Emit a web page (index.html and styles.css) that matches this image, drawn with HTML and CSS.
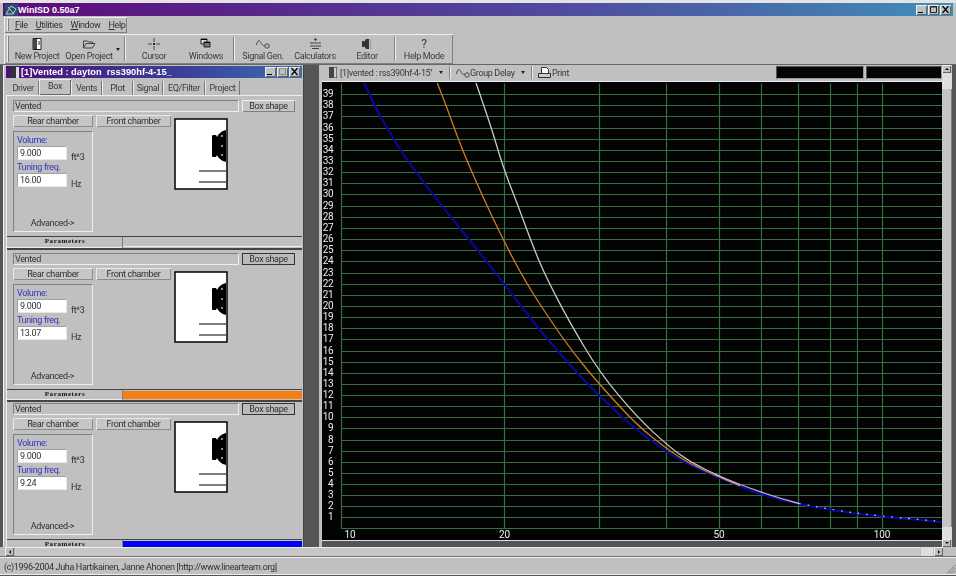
FILE: index.html
```html
<!DOCTYPE html>
<html lang="en">
<head>
    <meta charset="UTF-8">
    <meta name="viewport" content="width=device-width, initial-scale=1.0">
    <title>WinISD 0.50a7</title>
    <link rel="stylesheet" href="styles.css">
</head>
<body>
<div class="app">
    <div class="titlebar">
        <svg class="app-icon" width="13" height="12" viewBox="0 0 13 12"><rect width="13" height="12" fill="#2c4a6a"/><path d="M1 10L6 2l5 3-3 5zM3 3l6 7" stroke="#b8d0e0" fill="none"/></svg>
        <span class="app-name">WinISD 0.50a7</span>
        <div class="win-btns">
            <div class="win-btn"><svg width="11" height="9" viewBox="0 0 11 9"><path d="M2 7h5v1H2z" fill="#000"/></svg></div>
            <div class="win-btn"><svg width="11" height="9" viewBox="0 0 11 9"><path d="M2.5 1.5h6v6h-6zM2 2h7" stroke="#222" fill="none"/></svg></div>
            <div class="win-btn"><svg width="11" height="9" viewBox="0 0 11 9"><path d="M2.5 1l6 7M8.500 1l-6 7" stroke="#000" stroke-width="1.2"/></svg></div>
        </div>
    </div>

    <div class="menubar">
        <div class="menu-band">
            <div class="band-handle"></div>
            <span class="menu-item"><u>F</u>ile</span>
            <span class="menu-item"><u>U</u>tilities</span>
            <span class="menu-item"><u>W</u>indow</span>
            <span class="menu-item"><u>H</u>elp</span>
        </div>
    </div>

    <div class="toolbar">
        <div class="band-handle"></div>
        <div class="tool">
            <svg width="10" height="12" viewBox="0 0 10 12"><path d="M1 .5h8v11H1z" fill="#fff" stroke="#222"/><path d="M1 1h4v10H1z" fill="#444"/><path d="M7 3v4" stroke="#222"/></svg>
            <span>New Project</span>
        </div>
        <div class="tool">
            <svg width="14" height="12" viewBox="0 0 14 12"><path d="M1.5 10V3h4l1 1h4v2M1.500 10L4 5.500h9L10.500 10z" fill="none" stroke="#444"/></svg>
            <span>Open Project</span>
        </div>
        <div class="tool-arrow"></div>
        <div class="tool-sep"></div>
        <div class="tool">
            <svg width="12" height="12" viewBox="0 0 12 12"><path d="M6 0v4M6 8v4M0 6h4M8 6h4" stroke="#444"/><path d="M5 5h2v2H5z" fill="#222"/></svg>
            <span>Cursor</span>
        </div>
        <div class="tool">
            <svg width="12" height="12" viewBox="0 0 12 12"><path d="M1 1h6v5H1z" fill="#ddd" stroke="#222"/><path d="M4 4h6v5H4z" fill="#777" stroke="#222"/><path d="M1 1.500h6M4 4.500h6" stroke="#000"/></svg>
            <span>Windows</span>
        </div>
        <div class="tool-sep"></div>
        <div class="tool">
            <svg width="14" height="10" viewBox="0 0 14 10"><path d="M.5 6C1.500 1 3 1 4.500 3S7 8 9 6" fill="none" stroke="#444"/><circle cx="11" cy="7" r="2.200" fill="none" stroke="#444"/></svg>
            <span>Signal Gen.</span>
        </div>
        <div class="tool">
            <svg width="13" height="12" viewBox="0 0 13 12"><path d="M1 5h11M1 8h11" stroke="#444"/><path d="M6.500 0v3M5 1.500h3M3 10.500h7" stroke="#444"/></svg>
            <span>Calculators</span>
        </div>
        <div class="tool">
            <svg width="10" height="12" viewBox="0 0 10 12"><path d="M0 3h2v6H0zM2 4l2-3h3v10H4L2 8z" fill="#333"/><path d="M8 1h1v10H8z" fill="#999"/></svg>
            <span>Editor</span>
        </div>
        <div class="tool-sep"></div>
        <div class="tool">
            <b class="help-mark">?</b>
            <span>Help Mode</span>
        </div>
    </div>

    <div class="workspace">
        <div class="designer">
            <div class="designer-title">
                <svg width="8" height="11" viewBox="0 0 8 11"><path d="M0 0h8v11H0z" fill="#ddd"/><path d="M0 0h5v11H0z" fill="#333"/></svg>
                <span>[1]Vented : dayton&nbsp; rss390hf-4-15_</span>
                <div class="win-btns">
                    <div class="win-btn"><svg width="11" height="9" viewBox="0 0 11 9"><path d="M2 7h5v1H2z" fill="#000"/></svg></div>
                    <div class="win-btn"><svg width="11" height="9" viewBox="0 0 11 9"><path d="M2.500 1.500h6v6h-6z" stroke="#888" fill="none"/></svg></div>
                    <div class="win-btn"><svg width="11" height="9" viewBox="0 0 11 9"><path d="M2.500 1l6 7M8.500 1l-6 7" stroke="#000" stroke-width="1.200"/></svg></div>
                </div>
            </div>
            <div class="tabs">
                <div class="tab tab-driver">Driver</div>
                <div class="tab tab-active">Box</div>
                <div class="tab tab-vents">Vents</div>
                <div class="tab tab-plot">Plot</div>
                <div class="tab tab-signal">Signal</div>
                <div class="tab tab-eq">EQ/Filter</div>
                <div class="tab tab-project">Project</div>
            </div>

            <div class="panels">
                <div class="panel panel-first">
                    <div class="panel-top">
                        <div class="field-name">Vented</div>
                        <div class="shape-btn">Box shape</div>
                    </div>
                    <div class="panel-body">
                        <div class="col-rear">
                            <div class="chamber-btn">Rear chamber</div>
                            <div class="params">
                                <div class="param-label">Volume:</div>
                                <div class="param-row"><div class="param-input">9.000</div><span class="param-unit">ft^3</span></div>
                                <div class="param-label">Tuning freq.</div>
                                <div class="param-row"><div class="param-input">16.00</div><span class="param-unit">Hz</span></div>
                                <div class="advanced">Advanced-&gt;</div>
                            </div>
                        </div>
                        <div class="chamber-btn front-btn">Front chamber</div>
                        <svg class="box-drawing" width="54" height="72" viewBox="0 0 54 72"><rect x="1" y="1" width="52" height="70" fill="#fff" stroke="#000" stroke-width="1.500"/><path d="M52 12c-4 1-8 4-9 7l-1-2h-3c-1 0-1 1-1 2v18c0 1 0 2 1 2h3l1-2c1 3 5 6 9 7z" fill="#000"/><path d="M25 53h27M25 64h27" stroke="#000" stroke-width="1.200"/><path d="M47 18h2M47 28h2M47 37h2" stroke="#bbb" stroke-width="1.500"/></svg>
                    </div>
                    <div class="param-bar">
                        <div class="param-title">Parameters</div>
                        <div class="param-color"></div>
                    </div>
                </div>

                <div class="panel">
                    <div class="panel-top">
                        <div class="field-name">Vented</div>
                        <div class="shape-btn shape-focus">Box shape</div>
                    </div>
                    <div class="panel-body">
                        <div class="col-rear">
                            <div class="chamber-btn">Rear chamber</div>
                            <div class="params">
                                <div class="param-label">Volume:</div>
                                <div class="param-row"><div class="param-input">9.000</div><span class="param-unit">ft^3</span></div>
                                <div class="param-label">Tuning freq.</div>
                                <div class="param-row"><div class="param-input">13.07</div><span class="param-unit">Hz</span></div>
                                <div class="advanced">Advanced-&gt;</div>
                            </div>
                        </div>
                        <div class="chamber-btn front-btn">Front chamber</div>
                        <svg class="box-drawing" width="54" height="72" viewBox="0 0 54 72"><rect x="1" y="1" width="52" height="70" fill="#fff" stroke="#000" stroke-width="1.500"/><path d="M52 12c-4 1-8 4-9 7l-1-2h-3c-1 0-1 1-1 2v18c0 1 0 2 1 2h3l1-2c1 3 5 6 9 7z" fill="#000"/><path d="M25 53h27M25 64h27" stroke="#000" stroke-width="1.200"/><path d="M47 18h2M47 28h2M47 37h2" stroke="#bbb" stroke-width="1.500"/></svg>
                    </div>
                    <div class="param-bar">
                        <div class="param-title">Parameters</div>
                        <div class="param-color color-orange"></div>
                    </div>
                </div>

                <div class="panel panel-last">
                    <div class="panel-top">
                        <div class="field-name">Vented</div>
                        <div class="shape-btn shape-focus">Box shape</div>
                    </div>
                    <div class="panel-body">
                        <div class="col-rear">
                            <div class="chamber-btn">Rear chamber</div>
                            <div class="params">
                                <div class="param-label">Volume:</div>
                                <div class="param-row"><div class="param-input">9.000</div><span class="param-unit">ft^3</span></div>
                                <div class="param-label">Tuning freq.</div>
                                <div class="param-row"><div class="param-input">9.24</div><span class="param-unit">Hz</span></div>
                                <div class="advanced">Advanced-&gt;</div>
                            </div>
                        </div>
                        <div class="chamber-btn front-btn">Front chamber</div>
                        <svg class="box-drawing" width="54" height="72" viewBox="0 0 54 72"><rect x="1" y="1" width="52" height="70" fill="#fff" stroke="#000" stroke-width="1.500"/><path d="M52 12c-4 1-8 4-9 7l-1-2h-3c-1 0-1 1-1 2v18c0 1 0 2 1 2h3l1-2c1 3 5 6 9 7z" fill="#000"/><path d="M25 53h27M25 64h27" stroke="#000" stroke-width="1.200"/><path d="M47 18h2M47 28h2M47 37h2" stroke="#bbb" stroke-width="1.500"/></svg>
                    </div>
                    <div class="param-bar">
                        <div class="param-title">Parameters</div>
                        <div class="param-color color-blue"></div>
                    </div>
                </div>
            </div>
        </div>

        <div class="graph-window">
            <div class="graph-main">
                <div class="graph-toolbar">
                    <svg class="doc-icon" width="8" height="11" viewBox="0 0 8 11"><path d="M0 0h8v11H0z" fill="#ccc" stroke="#222"/><path d="M0 0h5v11H0z" fill="#444"/></svg>
                    <span class="graph-combo combo-project">[1]vented : rss390hf-4-15''</span>
                    <div class="tool-arrow"></div>
                    <div class="graph-sep"></div>
                    <svg class="wave-icon" width="14" height="10" viewBox="0 0 14 10"><path d="M.5 6C1.500 1 3 1 4.500 3S7 8 9 6" fill="none" stroke="#444"/><circle cx="11" cy="7" r="2.200" fill="none" stroke="#444"/></svg>
                    <span class="graph-combo combo-delay">Group Delay</span>
                    <div class="tool-arrow"></div>
                    <div class="graph-sep"></div>
                    <svg class="print-icon" width="13" height="12" viewBox="0 0 13 12"><path d="M3.500.5h5l2 2v4h-7z" fill="#fff" stroke="#333"/><path d="M.5 6.500h12v4H.5z" fill="#ccc" stroke="#333"/></svg>
                    <span class="graph-combo">Print</span>
                    <div class="readouts">
                        <div class="readout readout-a"></div>
                        <div class="readout readout-b"></div>
                    </div>
                </div>
                <svg class="plot" width="620" height="458" viewBox="322 82 620 458">
                    <rect x="322" y="82" width="620" height="458" fill="#030303"/>
                    <path class="grid" d="M341.500 83.500V528.500M504.500 83.500V528.500M599.500 83.500V528.500M666.500 83.500V528.500M719.500 83.500V528.500M761.500 83.500V528.500M798.500 83.500V528.500M830.500 83.500V528.500M857.500 83.500V528.500M882.500 83.500V528.500"/>
                    <path class="grid" d="M341 94.500H942M341 105.500H942M341 116.500H942M341 128.500H942M341 139.500H942M341 150.500H942M341 161.500H942M341 172.500H942M341 183.500H942M341 194.500H942M341 206.500H942M341 217.500H942M341 228.500H942M341 239.500H942M341 250.500H942M341 261.500H942M341 273.500H942M341 284.500H942M341 295.500H942M341 306.500H942M341 317.500H942M341 328.500H942M341 339.500H942M341 351.500H942M341 362.500H942M341 373.500H942M341 384.500H942M341 395.500H942M341 406.500H942M341 417.500H942M341 428.500H942M341 440.500H942M341 451.500H942M341 462.500H942M341 473.500H942M341 484.500H942M341 495.500H942M341 506.500H942M341 517.500H942M341 528.500H942"/>
                    <path class="curve curve-blue" d="M364 83Q376.700 110 382.500 120Q388.300 130 394.200 140Q400 150 408.400 161.500Q416.700 173 425 184Q433.300 195 443.300 207.500Q453.300 220 466.700 236.500Q480 253 492.500 269Q505 285 520.900 305.900Q536.700 326.700 551.700 344.200Q566.700 361.700 583.400 379.200Q600 396.700 618.400 413.400Q636.700 430 651.900 441Q667 452 675 457Q683 462 701 470Q719 478 740.500 486.500Q762 495 780.500 499.500Q799 504 814.500 507Q830 510 856 513.500Q882 517 942 522"/>
                    <path class="curve curve-orange" d="M437.300 83Q446.700 107 451.700 121Q456.700 135 461.700 147.500Q466.700 160 475 179Q483.300 198 493.300 219Q503.300 240 513.300 259Q523.300 278 535 296.500Q546.700 315 560 334Q573.300 353 586.700 369Q600 385 618.400 405Q636.700 425 651.900 437Q667 449 678.500 456.500Q690 464 704.500 470.500Q719 477 740 486"/>
                    <path class="curve curve-white" d="M476 83Q490 123 496.500 145Q503 167 510 185Q517 203 525.700 226.500Q534.300 250 541.300 265.900Q548.300 281.700 559.200 302.400Q570 323 585 348Q600 373 618.400 394.900Q636.700 416.700 651.900 430.900Q667 445 678.500 453.500Q690 462 704.500 469Q719 476 740 485"/>
                    <path class="curve curve-mix" d="M715 474.500Q762 494 799 503.500"/>
                    <path class="curve curve-dots" d="M799 503.500Q830 509.500 856 513Q882 516.500 942 521.500"/>
                    <g class="axis-y">
                        <text y="97">39</text><text y="108">38</text><text y="119">37</text><text y="131">36</text><text y="142">35</text><text y="153">34</text><text y="164">33</text><text y="175">32</text><text y="186">31</text><text y="197">30</text><text y="209">29</text><text y="220">28</text><text y="231">27</text><text y="242">26</text><text y="253">25</text><text y="264">24</text><text y="276">23</text><text y="287">22</text><text y="298">21</text><text y="309">20</text><text y="320">19</text><text y="331">18</text><text y="342">17</text><text y="354">16</text><text y="365">15</text><text y="376">14</text><text y="387">13</text><text y="398">12</text><text y="409">11</text><text y="420">10</text>
                        <text y="431">9</text><text y="443">8</text><text y="454">7</text><text y="465">6</text><text y="476">5</text><text y="487">4</text><text y="498">3</text><text y="509">2</text><text y="520">1</text>
                    </g>
                    <g class="axis-x">
                        <text x="350" y="538">10</text><text x="504.500" y="538">20</text><text x="719" y="538">50</text><text x="882" y="538">100</text>
                    </g>
                </svg>
                <div class="graph-bottom"></div>
            </div>
            <div class="vscroll">
                <div class="scroll-btn"><span class="tri-up"></span></div>
                <div class="vscroll-track"></div>
                <div class="vscroll-thumb"></div>
                <div class="vscroll-end"></div>
                <div class="scroll-btn"><span class="tri-down"></span></div>
            </div>
        </div>
    </div>

    <div class="hscroll">
        <div class="scroll-btn"><span class="tri-left"></span></div>
        <div class="hscroll-thumb"></div>
        <div class="hscroll-end"></div>
        <div class="scroll-btn"><span class="tri-right"></span></div>
    </div>

    <div class="statusbar">
        <span>(c)1996-2004 Juha Hartikainen, Janne Ahonen [http://www.linearteam.org]</span>
        <svg class="grip" width="10" height="10" viewBox="0 0 10 10"><path d="M9.500 1L1 9.500M9.500 4L4 9.500M9.500 7L7 9.500" stroke="#777"/></svg>
    </div>
</div>
</body>
</html>
```

FILE: styles.css
```css
* {
    margin: 0;
    padding: 0;
    box-sizing: border-box;
}
body {
    width: 956px;
    height: 576px;
    overflow: hidden;
    background: #c0c0c0;
    color: #303030;
    font-family: Roboto, "Liberation Sans", sans-serif;
    font-size: 9px;
    letter-spacing: -.35px;
    line-height: 12px;
}
.app {
    display: flex;
    flex-direction: column;
    height: 576px;
    border-top: 3px solid #e4e4e4;
    border-bottom: 2px solid #555;
    filter: blur(.35px);
}

/* title bar */
.titlebar {
    height: 13px;
    margin: 0 3px;
    flex: none;
    display: flex;
    align-items: center;
    padding-left: 2px;
    background: linear-gradient(90deg, #5e0a7c, #4f4fa0 62%, #3f8fb8);
}
.app-name {
    color: #fff;
    font-family: "Liberation Sans", sans-serif;
    font-weight: bold;
    font-size: 9px;
    letter-spacing: 0;
}
.win-btns {
    margin-left: auto;
    display: flex;
    gap: 1px;
    padding-right: 2px;
}
.win-btn {
    width: 11px;
    height: 10px;
    background: #c0c0c0;
    box-shadow: inset 1px 1px #eee, inset -1px -1px #666;
    display: flex;
}

/* menu + toolbar */
.menubar {
    height: 18px;
    flex: none;
    padding: 1px 0 1px 4px;
}
.menu-band {
    width: 123px;
    height: 16px;
    padding-left: 3px;
    display: flex;
    align-items: center;
    gap: 8px;
    box-shadow: inset 1px 1px #eee, inset -1px -1px #808080;
}
.menu-band .band-handle {
    height: 12px;
    margin-right: -2px;
}
.band-handle {
    width: 2px;
    margin: 2px 2px 2px 0;
    flex: none;
    border-left: 1px solid #eee;
    border-right: 1px solid #808080;
}
.menu-item {
    white-space: nowrap;
}
.toolbar {
    width: 449px;
    height: 30px;
    flex: none;
    margin-left: 4px;
    padding-left: 3px;
    display: flex;
    align-items: stretch;
    box-shadow: inset 1px 1px #eee, inset -1px -1px #808080;
}
.tool {
    width: 52px;
    display: flex;
    flex-direction: column;
    align-items: center;
    justify-content: flex-end;
    padding-bottom: 2px;
    white-space: nowrap;
    color: #3a3a3a;
}
.tool svg {
    height: 12px;
}
.help-mark {
    height: 12px;
    font-weight: normal;
    font-size: 12px;
    color: #444;
}
.tool-arrow {
    width: 0;
    height: 0;
    border: 2.5px solid transparent;
    border-top: 3px solid #222;
    border-bottom: 0;
    align-self: center;
    margin: 0 3px 0 1px;
}
.tool-sep {
    width: 2px;
    margin: 3px 2px 3px 1px;
    border-left: 1px solid #808080;
    border-right: 1px solid #eee;
}

/* MDI area */
.workspace {
    height: 483px;
    flex: none;
    display: flex;
    overflow: hidden;
    background: #555;
    border-top: 1px solid #666;
}
.designer {
    width: 301px;
    margin-left: 3px;
    height: 482px;
    overflow: hidden;
    background: #c0c0c0;
    padding: 0 1px;
    border-left: 1px solid #eee;
    border-right: 1px solid #444;
}
.designer-title {
    height: 12px;
    margin: 1px 0 2px 1px;
    display: flex;
    align-items: center;
    gap: 2px;
    padding-left: 5px;
    color: #fff;
    font-family: "Liberation Sans", sans-serif;
    font-weight: bold;
    font-size: 9.3px;
    letter-spacing: 0;
    background: linear-gradient(90deg, #4a1078, #3b3f98 60%, #3e6cb0);
}
.tabs {
    height: 15px;
    padding-left: 3px;
    display: flex;
    align-items: flex-end;
}
.tab {
    height: 14px;
    text-align: center;
    line-height: 14px;
    border-right: 1px solid #777;
    border-left: 1px solid #eee;
    color: #3a3a3a;
}
.tab-driver { width: 31px; border-left: 0; }
.tab-active {
    width: 32px;
    height: 16px;
    line-height: 15px;
    box-shadow: inset 1px 1px #eee, inset -1px -1px #666;
    border: 0;
}
.tab-vents { width: 31px; }
.tab-plot { width: 31px; }
.tab-signal { width: 30px; }
.tab-eq { width: 42px; }
.tab-project { width: 35px; }
.panels {
    border-left: 1px solid #eee;
    margin-left: 1px;
}
.panel {
    padding-top: 3px;
    border-bottom: 2px solid #444;
}
.panel-first {
    padding-top: 4px;
    border-top: 1px solid #eee;
}
.panel-first .param-bar {
    height: 12px;
}
.panel-last {
    padding-top: 1px;
}
.panel-top {
    height: 12px;
    padding-left: 6px;
    display: flex;
    gap: 3px;
}
.field-name {
    width: 226px;
    padding-left: 1px;
    border-top: 1px solid #808080;
    border-left: 1px solid #808080;
    border-right: 1px solid #eee;
    border-bottom: 1px solid #eee;
    line-height: 10px;
}
.shape-btn {
    width: 53px;
    text-align: center;
    background: #c4c4c4;
    box-shadow: inset 1px 1px #eee, inset -1px -1px #808080;
}
.shape-focus {
    border: 1px solid #333;
    line-height: 10px;
    background: #bbb;
    box-shadow: none;
}
.panel-body {
    height: 124px;
    padding: 3px 0 0 6px;
    display: flex;
    align-items: flex-start;
}
.col-rear {
    width: 80px;
}
.chamber-btn {
    height: 12px;
    text-align: center;
    background: #c6c6c6;
    box-shadow: inset 1px 1px #e8e8e8, inset -1px -1px #8c8c8c;
}
.front-btn {
    width: 75px;
    margin-left: 3px;
}
.box-drawing {
    margin: 3px 0 0 3px;
    flex: none;
}
.params {
    height: 101px;
    margin-top: 4px;
    padding: 3px 0 2px 3px;
    display: flex;
    flex-direction: column;
    border-top: 1px solid #808080;
    border-left: 1px solid #808080;
    border-right: 1px solid #eee;
    border-bottom: 1px solid #eee;
}
.param-label {
    height: 10px;
    line-height: 10px;
    color: #3232c4;
}
.param-row {
    display: flex;
    height: 14px;
    margin: 1px 0 2px;
}
.param-input {
    width: 50px;
    height: 14px;
    padding-left: 2px;
    line-height: 13px;
    background: #fff;
    border-top: 1px solid #a0a0a0;
    border-left: 1px solid #a0a0a0;
    border-right: 1px solid #e8e8e8;
    border-bottom: 1px solid #e8e8e8;
}
.param-unit {
    margin: 5px 0 0 4px;
}
.advanced {
    margin-top: auto;
    padding-right: 4px;
    text-align: center;
    line-height: 11px;
}
.param-bar {
    height: 11px;
    border-top: 1px solid #444;
    display: flex;
}
.param-title {
    width: 116px;
    text-align: center;
    font-family: "Liberation Serif", serif;
    font-weight: bold;
    font-size: 7px;
    letter-spacing: .6px;
    line-height: 9px;
    color: #111;
    box-shadow: inset -1px 0 #808080, inset 0 -1px #eee;
}
.param-color {
    flex: 1;
    margin: 1px 0;
    box-shadow: inset 0 -1px #eee;
}
.color-orange {
    background: #f28012;
    box-shadow: none;
}
.color-blue {
    background: #0000ee;
    box-shadow: none;
}

/* graph window */
.graph-window {
    width: 633px;
    height: 482px;
    margin-left: 15px;
    display: flex;
    background: #c0c0c0;
}
.graph-main {
    width: 620px;
    margin-left: 3px;
    display: flex;
    flex-direction: column;
}
.graph-toolbar {
    height: 17px;
    flex: none;
    padding: 1px 0 2px 7px;
    display: flex;
    align-items: center;
    border-bottom: 1px solid #eee;
    color: #3a3a3a;
}
.doc-icon {
    margin-right: 3px;
}
.graph-combo {
    white-space: nowrap;
}
.combo-project {
    width: 98px;
}
.combo-delay {
    width: 50px;
}
.graph-sep {
    width: 2px;
    height: 13px;
    margin: 0 5px 0 3px;
    border-left: 1px solid #808080;
    border-right: 1px solid #eee;
}
.print-icon {
    margin-right: 1px;
}
.readouts {
    margin-left: auto;
    display: flex;
    gap: 2px;
}
.readout {
    height: 13px;
    background: #050505;
    border: 1px solid #555;
    border-right-color: #999;
    border-bottom-color: #999;
}
.readout-a { width: 88px; }
.readout-b { width: 76px; }
.plot {
    display: block;
    flex: none;
}
.grid {
    fill: none;
    stroke: #33703e;
    stroke-width: 1.2;
}
.curve {
    fill: none;
    stroke-linejoin: round;
}
.curve-blue {
    stroke: #0808a0;
    stroke-width: 2;
}
.curve-orange {
    stroke: #d47a20;
    stroke-width: 1.3;
}
.curve-white {
    stroke: #c4ccc4;
    stroke-width: 1.3;
}
.curve-mix {
    stroke: #c8a8d0;
    stroke-width: 1.3;
}
.curve-dots {
    stroke: #d0d0f4;
    stroke-width: 1.2;
    stroke-dasharray: 1.5 7;
}
.axis-y text,
.axis-x text {
    fill: #ececec;
    font-size: 10px;
    letter-spacing: -.2px;
}
.axis-y text {
    text-anchor: end;
    transform: translateX(333.5px);
}
.axis-x text {
    text-anchor: middle;
}
.graph-bottom {
    flex: 1;
    background: #555;
    border-top: 1px solid #ddd;
}

/* scrollbars */
.vscroll {
    width: 10px;
    display: flex;
    flex-direction: column;
}
.scroll-btn {
    width: 9px;
    height: 8px;
    flex: none;
    background: #c0c0c0;
    box-shadow: inset 1px 1px #eee, inset -1px -1px #666;
    display: flex;
    align-items: center;
    justify-content: center;
}
.vscroll-track {
    height: 16px;
    background: #dedede;
}
.vscroll-thumb {
    flex: 1;
    background: #c4c4c4;
    border-right: 1px solid #808080;
}
.vscroll-end {
    height: 12px;
    background: #dedede;
}
.tri-up, .tri-down, .tri-left, .tri-right {
    width: 0;
    height: 0;
    border: 2px solid transparent;
}
.tri-up { border-bottom-color: #111; border-top: 0; }
.tri-down { border-top-color: #111; border-bottom: 0; }
.tri-left { border-right-color: #111; border-left: 0; }
.tri-right { border-left-color: #111; border-right: 0; }
.hscroll {
    height: 10px;
    flex: none;
    display: flex;
    gap: 1px;
    padding-left: 5px;
    border-bottom: 1px solid #707070;
}
.hscroll .scroll-btn {
    height: 9px;
}
.hscroll-thumb {
    width: 905px;
    height: 9px;
    background: #c6c6c6;
    border-top: 1px solid #eee;
}
.hscroll-end {
    width: 12px;
    height: 9px;
    background: #dedede;
}
.statusbar {
    flex: 1;
    padding: 3px 0 0 4px;
    display: flex;
    justify-content: space-between;
    border-top: 1px solid #eee;
    border-bottom: 1px solid #eee;
}
.grip {
    margin-top: 3px;
}
```
